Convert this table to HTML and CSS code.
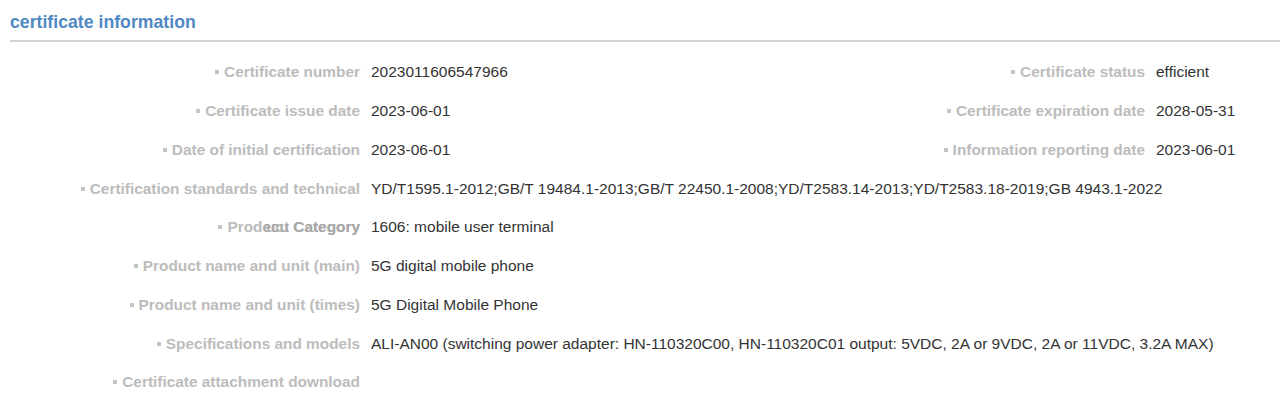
FILE: index.html
```html
<!DOCTYPE html>
<html>
<head>
<meta charset="utf-8">
<link rel="stylesheet" href="styles.css">
</head>
<body>
<div class="page">
  <h2 class="title">certificate information</h2>
  <div class="grid">
    <div class="lbl">Certificate number</div>
    <div class="val">2023011606547966</div>
    <div class="lbl">Certificate status</div>
    <div class="val">efficient</div>

    <div class="lbl">Certificate issue date</div>
    <div class="val">2023-06-01</div>
    <div class="lbl">Certificate expiration date</div>
    <div class="val">2028-05-31</div>

    <div class="lbl">Date of initial certification</div>
    <div class="val">2023-06-01</div>
    <div class="lbl">Information reporting date</div>
    <div class="val">2023-06-01</div>

    <div class="lbl">Certification standards and technical</div>
    <div class="val wide">YD/T1595.1-2012;GB/T 19484.1-2013;GB/T 22450.1-2008;YD/T2583.14-2013;YD/T2583.18-2019;GB 4943.1-2022</div>

    <div class="lbl">Prod<span class="stack"><span class="s1">uct Category</span><span class="s2">ecu Category</span></span></div>
    <div class="val wide">1606: mobile user terminal</div>

    <div class="lbl">Product name and unit (main)</div>
    <div class="val wide">5G digital mobile phone</div>

    <div class="lbl">Product name and unit (times)</div>
    <div class="val wide">5G Digital Mobile Phone</div>

    <div class="lbl">Specifications and models</div>
    <div class="val wide">ALI-AN00 (switching power adapter: HN-110320C00, HN-110320C01 output: 5VDC, 2A or 9VDC, 2A or 11VDC, 3.2A MAX)</div>

    <div class="lbl">Certificate attachment download</div>
    <div class="val wide"></div>
  </div>
</div>
</body>
</html>
```

FILE: styles.css
```css
html, body {
  margin: 0;
  padding: 0;
  background: #ffffff;
}
body {
  font-family: "Liberation Sans", Arial, sans-serif;
}
.page {
  width: 1280px;
}
.title {
  margin: 0 0 0 10px;
  height: 40px;
  line-height: 44px;
  font-size: 17.7px;
  font-weight: bold;
  color: #4f88c2;
  border-bottom: 2px solid #d2d2d2;
}
.grid {
  display: grid;
  grid-template-columns: 360px 1fr auto 124px;
  grid-auto-rows: 38.75px;
  column-gap: 11px;
  padding-top: 11px;
  align-items: center;
}
.lbl {
  text-align: right;
  font-size: 15.4px;
  font-weight: bold;
  color: #bcbcbc;
  white-space: nowrap;
}
.lbl::before {
  content: "";
  display: inline-block;
  width: 4px;
  height: 4px;
  background: #c4c4c4;
  margin-right: 5px;
  vertical-align: middle;
  position: relative;
  top: -1px;
}
.val {
  font-size: 15.5px;
  color: #333333;
  white-space: nowrap;
}
.wide {
  grid-column: 2 / -1;
}
.stack {
  display: inline-grid;
}
.stack > span {
  grid-area: 1 / 1;
}
.s1 {
  justify-self: end;
}
.s2 {
  justify-self: start;
  color: #a8a8a8;
}
```
